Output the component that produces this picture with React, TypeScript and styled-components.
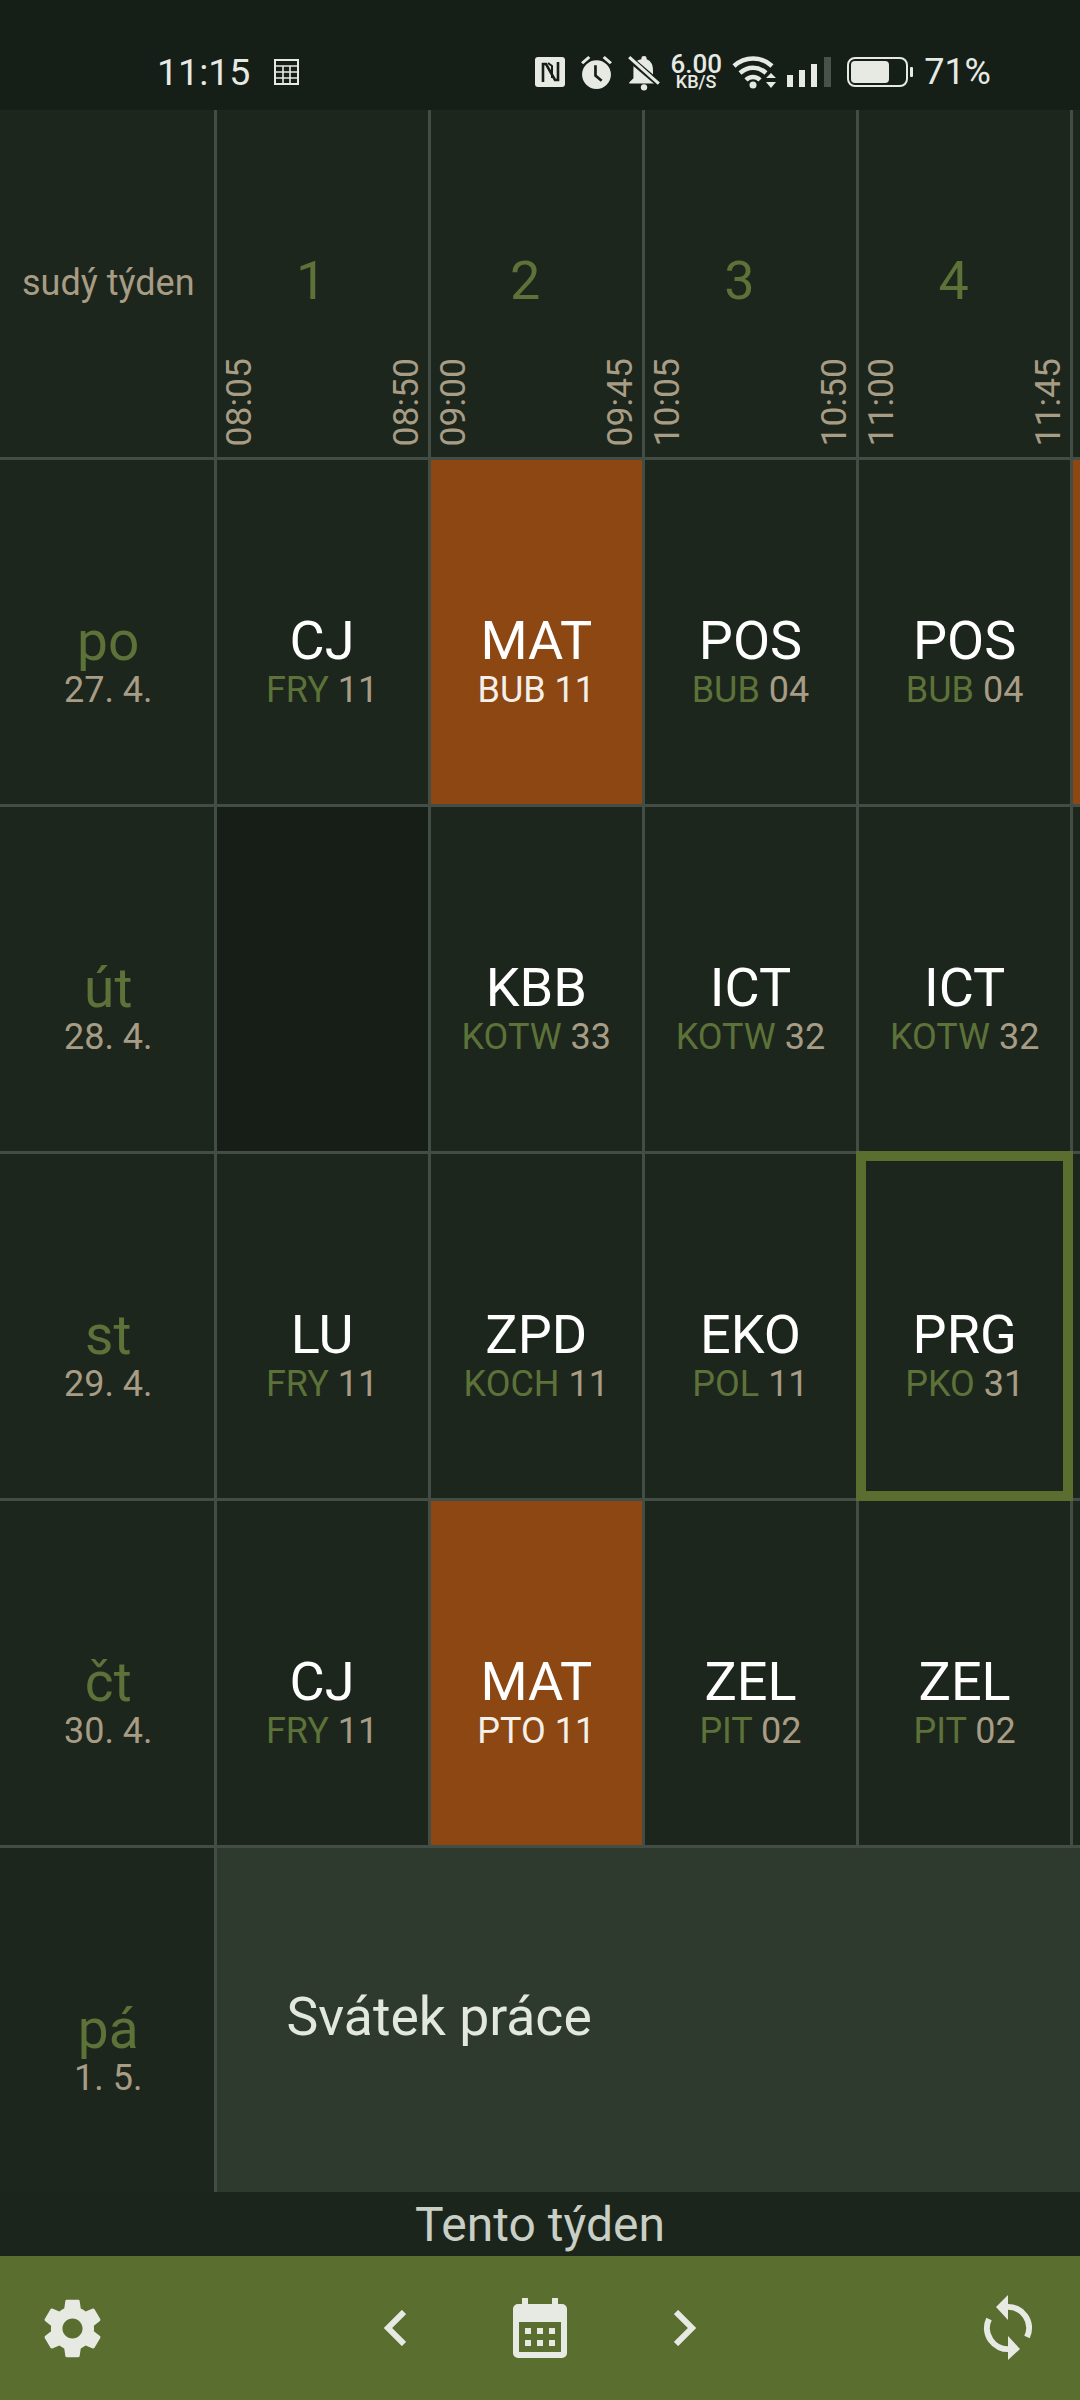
import { Fragment } from "react"
import styled, { createGlobalStyle, css } from "styled-components"

const colors = {
  status: "#161e18",
  cell: "#1c261d",
  empty: "#171e17",
  line: "#414d45",
  green: "#5d7238",
  bar: "#5a6e30",
  tan: "#a89c84",
  orange: "#8c4712",
  holiday: "#2f3a2e",
  icon: "#e6eae3",
}

const GlobalStyle = createGlobalStyle`
  html, body {
    margin: 0;
    background: ${colors.cell};
  }
  body {
    font-family: Roboto, "Liberation Sans", sans-serif;
  }
`

const Page = styled.div`
  width: 1080px;
  height: 2400px;
  display: flex;
  flex-direction: column;
  overflow: hidden;
`

const StatusBar = styled.div`
  height: 110px;
  padding: 34px 89px 0 157px;
  box-sizing: border-box;
  display: flex;
  align-items: center;
  justify-content: space-between;
  background: ${colors.status};
  color: ${colors.icon};
`

const StatusGroup = styled.div<{ $gap: number }>`
  display: flex;
  align-items: center;
  gap: ${(p) => p.$gap}px;
`

const StatusTime = styled.span`
  font-size: 37.5px;
  line-height: 40px;
`

const StatusPercent = styled.span`
  font-size: 36px;
  line-height: 40px;
`

const Speed = styled.div`
  width: 52px;
  display: flex;
  flex-direction: column;
  align-items: center;
  font-weight: 500;
  white-space: nowrap;
  span:first-child {
    font-size: 26px;
    line-height: 19px;
  }
  span:last-child {
    font-size: 18px;
    line-height: 15px;
  }
`

const Grid = styled.div`
  height: 2082px;
  display: grid;
  grid-template-columns: 213.5px repeat(4, 211.2px) 1fr;
  grid-template-rows: 346.5px repeat(5, 1fr);
  gap: 3px;
  background: ${colors.line};
  overflow: hidden;
`

const Corner = styled.div`
  background: ${colors.cell};
  color: ${colors.tan};
  font-size: 36px;
  padding-left: 3px;
  display: flex;
  align-items: center;
  justify-content: center;
`

const HourCell = styled.div`
  background: ${colors.cell};
  display: grid;
  min-width: 0;
  overflow: hidden;
`

const HourNumber = styled.div`
  grid-area: 1 / 1;
  padding: 0 22px 5px 0;
  display: flex;
  align-items: center;
  justify-content: center;
  color: ${colors.green};
  font-size: 54px;
`

const HourTimes = styled.div`
  grid-area: 1 / 1;
  padding: 0 4px 10px 5px;
  display: flex;
  align-items: flex-end;
  justify-content: space-between;
`

const Time = styled.span`
  writing-mode: vertical-rl;
  transform: rotate(180deg);
  color: ${colors.tan};
  font-size: 35.5px;
  line-height: 35px;
`

const DayCell = styled.div`
  background: ${colors.cell};
  padding: 60px 0 0 3px;
  display: flex;
  flex-direction: column;
  align-items: center;
  justify-content: center;
`

const DayName = styled.div`
  color: ${colors.green};
  font-size: 55px;
  line-height: 56px;
`

const DayDate = styled.div`
  color: ${colors.tan};
  font-size: 36px;
  line-height: 42px;
`

const LessonCell = styled.div<{ $variant?: "orange" | "empty" | "current" }>`
  min-width: 0;
  padding-top: 60px;
  display: flex;
  flex-direction: column;
  align-items: center;
  justify-content: center;
  background: ${(p) =>
    p.$variant === "orange" ? colors.orange : p.$variant === "empty" ? colors.empty : colors.cell};
  ${(p) =>
    p.$variant === "current" &&
    css`
      box-shadow: inset 0 0 0 7px ${colors.bar};
      outline: 3px solid ${colors.bar};
    `}
`

const Subject = styled.div`
  color: #fff;
  font-size: 54px;
  line-height: 56px;
`

const Detail = styled.div`
  font-size: 36px;
  line-height: 42px;
  white-space: nowrap;
`

const Teacher = styled.span<{ $light?: boolean }>`
  color: ${(p) => (p.$light ? "#f4efe8" : colors.green)};
`

const Room = styled.span<{ $light?: boolean }>`
  color: ${(p) => (p.$light ? "#f4efe8" : colors.tan)};
`

const Holiday = styled.div`
  grid-column: 2 / -1;
  background: ${colors.holiday};
  color: #e3e8dc;
  font-size: 53.5px;
  padding: 0 0 6px 70px;
  display: flex;
  align-items: center;
`

const WeekLabel = styled.div`
  height: 64px;
  display: flex;
  align-items: center;
  justify-content: center;
  background: #1b251b;
  color: #c9cfc5;
  font-size: 48px;
`

const BottomBar = styled.div`
  flex: 1;
  display: grid;
  grid-template-columns: 1fr auto 1fr;
  align-items: center;
  background: ${colors.bar};
  color: ${colors.icon};
`

const BarSide = styled.div<{ $end?: boolean }>`
  display: flex;
  justify-content: ${(p) => (p.$end ? "flex-end" : "flex-start")};
  padding: ${(p) => (p.$end ? "0 44px 0 0" : "0 0 0 38px")};
`

const BarCenter = styled.div`
  display: flex;
  align-items: center;
  gap: 107px;
`

const hours = [
  { n: 1, from: "08:05", to: "08:50" },
  { n: 2, from: "09:00", to: "09:45" },
  { n: 3, from: "10:05", to: "10:50" },
  { n: 4, from: "11:00", to: "11:45" },
]

type Lesson = {
  subject?: string
  teacher?: string
  room?: string
  variant?: "orange" | "empty" | "current"
}

const days: { name: string; date: string; lessons: Lesson[] }[] = [
  {
    name: "po",
    date: "27. 4.",
    lessons: [
      { subject: "CJ", teacher: "FRY", room: "11" },
      { subject: "MAT", teacher: "BUB", room: "11", variant: "orange" },
      { subject: "POS", teacher: "BUB", room: "04" },
      { subject: "POS", teacher: "BUB", room: "04" },
      { variant: "orange" },
    ],
  },
  {
    name: "út",
    date: "28. 4.",
    lessons: [
      { variant: "empty" },
      { subject: "KBB", teacher: "KOTW", room: "33" },
      { subject: "ICT", teacher: "KOTW", room: "32" },
      { subject: "ICT", teacher: "KOTW", room: "32" },
      {},
    ],
  },
  {
    name: "st",
    date: "29. 4.",
    lessons: [
      { subject: "LU", teacher: "FRY", room: "11" },
      { subject: "ZPD", teacher: "KOCH", room: "11" },
      { subject: "EKO", teacher: "POL", room: "11" },
      { subject: "PRG", teacher: "PKO", room: "31", variant: "current" },
      {},
    ],
  },
  {
    name: "čt",
    date: "30. 4.",
    lessons: [
      { subject: "CJ", teacher: "FRY", room: "11" },
      { subject: "MAT", teacher: "PTO", room: "11", variant: "orange" },
      { subject: "ZEL", teacher: "PIT", room: "02" },
      { subject: "ZEL", teacher: "PIT", room: "02" },
      {},
    ],
  },
]

function GridIcon() {
  return (
    <svg width="25" height="26" viewBox="0 0 25 26" fill="none" stroke="currentColor" strokeWidth="2">
      <rect x="1" y="1" width="23" height="24" />
      <path d="M1 7h23M1 13h23M1 19h23M9 7v18M16 7v18" strokeWidth="1.6" />
    </svg>
  )
}

function NfcIcon() {
  return (
    <svg width="30" height="30" viewBox="0 0 30 30">
      <rect width="30" height="30" rx="3" fill="currentColor" />
      <path d="M8 25V7h3l9 16h3V5" fill="none" stroke={colors.status} strokeWidth="2.6" />
      <path d="M13 6l4 3v12" fill="none" stroke={colors.status} strokeWidth="2" />
    </svg>
  )
}

function AlarmIcon() {
  return (
    <svg width="33" height="34" viewBox="0 0 32 33" fill="currentColor">
      <circle cx="16" cy="19" r="14" />
      <path d="M1 7l7-6 2 2-7 6zM31 7l-7-6-2 2 7 6z" />
      <path d="M15 10v10l6 5" fill="none" stroke={colors.status} strokeWidth="2.6" />
    </svg>
  )
}

function BellOffIcon() {
  return (
    <svg width="32" height="37" viewBox="0 0 30 35" fill="currentColor">
      <path d="M15 2c2 0 2.5 1 2.5 3 4 1.500 6 5 6 10v8l5 4v1H1v-1l4-4v-9c0-5 2-8 7.500-9 0-2 .5-3 2.500-3z" />
      <circle cx="15" cy="31.500" r="3" />
      <path d="M1 4l28 24" stroke={colors.status} strokeWidth="6" />
      <path d="M1 3l28 25" stroke="currentColor" strokeWidth="3" />
    </svg>
  )
}

function WifiIcon() {
  return (
    <svg width="45" height="33" viewBox="0 0 45 33" fill="none" stroke="currentColor" strokeWidth="4.500">
      <path d="M2 10c11-10 27-10 38 0" />
      <path d="M8 17c8-7 18-7 26 0" />
      <path d="M14 24c4-4 10-4 14 0" />
      <circle cx="21" cy="29" r="3.500" fill="currentColor" stroke="none" />
      <path d="M34 22l5-5 5 5zM34 26l5 6 5-6z" fill="currentColor" stroke="none" />
    </svg>
  )
}

function SignalIcon() {
  return (
    <svg width="44" height="30" viewBox="0 0 44 30" fill="currentColor">
      <rect x="0" y="18" width="6" height="12" />
      <rect x="12" y="13" width="6" height="17" />
      <rect x="24" y="7" width="6" height="23" />
      <rect x="37" y="0" width="7" height="30" opacity="0.25" />
    </svg>
  )
}

function BatteryIcon() {
  return (
    <svg width="67" height="30" viewBox="0 0 67 30" fill="none" stroke="currentColor">
      <rect x="1" y="1" width="59" height="28" rx="7" strokeWidth="2" />
      <rect x="4" y="4" width="38" height="22" rx="4" fill="currentColor" stroke="none" />
      <rect x="63" y="10" width="3" height="10" rx="1" fill="currentColor" stroke="none" />
    </svg>
  )
}

function GearIcon() {
  return (
    <svg width="69" height="69" viewBox="0 0 24 24" fill="currentColor">
      <path d="M19.43 12.98c.04-.32.07-.64.07-.98s-.03-.66-.07-.98l2.11-1.65c.19-.15.24-.42.12-.64l-2-3.46c-.12-.22-.39-.3-.61-.22l-2.49 1c-.52-.4-1.08-.73-1.69-.98l-.38-2.65C14.46 2.18 14.25 2 14 2h-4c-.25 0-.46.18-.49.42l-.38 2.65c-.61.25-1.17.59-1.69.98l-2.49-1c-.23-.09-.49 0-.61.22l-2 3.46c-.13.22-.07.49.12.64l2.11 1.65c-.04.32-.07.65-.07.98s.03.66.07.98l-2.11 1.65c-.19.15-.24.42-.12.64l2 3.46c.12.22.39.3.61.22l2.49-1c.52.4 1.08.73 1.69.98l.38 2.65c.03.24.24.42.49.42h4c.25 0 .46-.18.49-.42l.38-2.65c.61-.25 1.17-.59 1.69-.98l2.49 1c.23.09.49 0 .61-.22l2-3.46c.12-.22.07-.49-.12-.64l-2.11-1.65zM12 15.5c-1.93 0-3.5-1.57-3.5-3.5s1.57-3.5 3.5-3.5 3.5 1.57 3.5 3.5-1.57 3.5-3.5 3.5z" />
    </svg>
  )
}

function Chevron({ flip }: { flip?: boolean }) {
  return (
    <svg width="22" height="36" viewBox="0 0 22 36" fill="none" stroke="currentColor" strokeWidth="6">
      <path d={flip ? "M2 2l16 16L2 34" : "M20 2L4 18l16 16"} />
    </svg>
  )
}

function CalendarIcon() {
  return (
    <svg width="54" height="60" viewBox="0 0 54 60">
      <path
        d="M9 0h6v6h24V0h6v6h4a5 5 0 0 1 5 5v44a5 5 0 0 1-5 5H5a5 5 0 0 1-5-5V11a5 5 0 0 1 5-5h4z"
        fill="currentColor"
      />
      <rect x="6" y="24" width="42" height="30" fill={colors.bar} />
      <path
        d="M12 30h6v6h-6zM24 30h6v6h-6zM36 30h6v6h-6zM12 42h6v6h-6zM24 42h6v6h-6zM36 42h6v6h-6z"
        fill="currentColor"
      />
    </svg>
  )
}

function SyncIcon() {
  return (
    <svg width="56" height="72" viewBox="0 0 56 72" fill="currentColor">
      <path d="M16 15L28 3v25z" />
      <path d="M40 57L28 44v24z" />
      <path d="M26 15A21 21 0 0 1 47 45M30 57A21 21 0 0 1 9 27" fill="none" stroke="currentColor" strokeWidth="6" />
    </svg>
  )
}

export default function App() {
  return (
    <Page>
      <GlobalStyle />
      <StatusBar>
        <StatusGroup $gap={24}>
          <StatusTime>11:15</StatusTime>
          <GridIcon />
        </StatusGroup>
        <StatusGroup $gap={10}>
          <StatusGroup $gap={15}>
            <NfcIcon />
            <AlarmIcon />
            <BellOffIcon />
          </StatusGroup>
          <Speed>
            <span>6.00</span>
            <span>KB/S</span>
          </Speed>
          <WifiIcon />
          <StatusGroup $gap={16}>
            <SignalIcon />
            <BatteryIcon />
          </StatusGroup>
          <StatusPercent>71%</StatusPercent>
        </StatusGroup>
      </StatusBar>

      <Grid>
        <Corner>sudý týden</Corner>
        {hours.map((hour) => (
          <HourCell key={hour.n}>
            <HourNumber>{hour.n}</HourNumber>
            <HourTimes>
              <Time>{hour.from}</Time>
              <Time>{hour.to}</Time>
            </HourTimes>
          </HourCell>
        ))}
        <HourCell />

        {days.map((day) => (
          <Fragment key={day.name}>
            <DayCell>
              <DayName>{day.name}</DayName>
              <DayDate>{day.date}</DayDate>
            </DayCell>
            {day.lessons.map((lesson, i) => (
              <LessonCell key={i} $variant={lesson.variant}>
                {lesson.subject && (
                  <>
                    <Subject>{lesson.subject}</Subject>
                    <Detail>
                      <Teacher $light={lesson.variant === "orange"}>{lesson.teacher}</Teacher>{" "}
                      <Room $light={lesson.variant === "orange"}>{lesson.room}</Room>
                    </Detail>
                  </>
                )}
              </LessonCell>
            ))}
          </Fragment>
        ))}

        <DayCell>
          <DayName>pá</DayName>
          <DayDate>1. 5.</DayDate>
        </DayCell>
        <Holiday>Svátek práce</Holiday>
      </Grid>

      <WeekLabel>Tento týden</WeekLabel>

      <BottomBar>
        <BarSide>
          <GearIcon />
        </BarSide>
        <BarCenter>
          <Chevron />
          <CalendarIcon />
          <Chevron flip />
        </BarCenter>
        <BarSide $end>
          <SyncIcon />
        </BarSide>
      </BottomBar>
    </Page>
  )
}
